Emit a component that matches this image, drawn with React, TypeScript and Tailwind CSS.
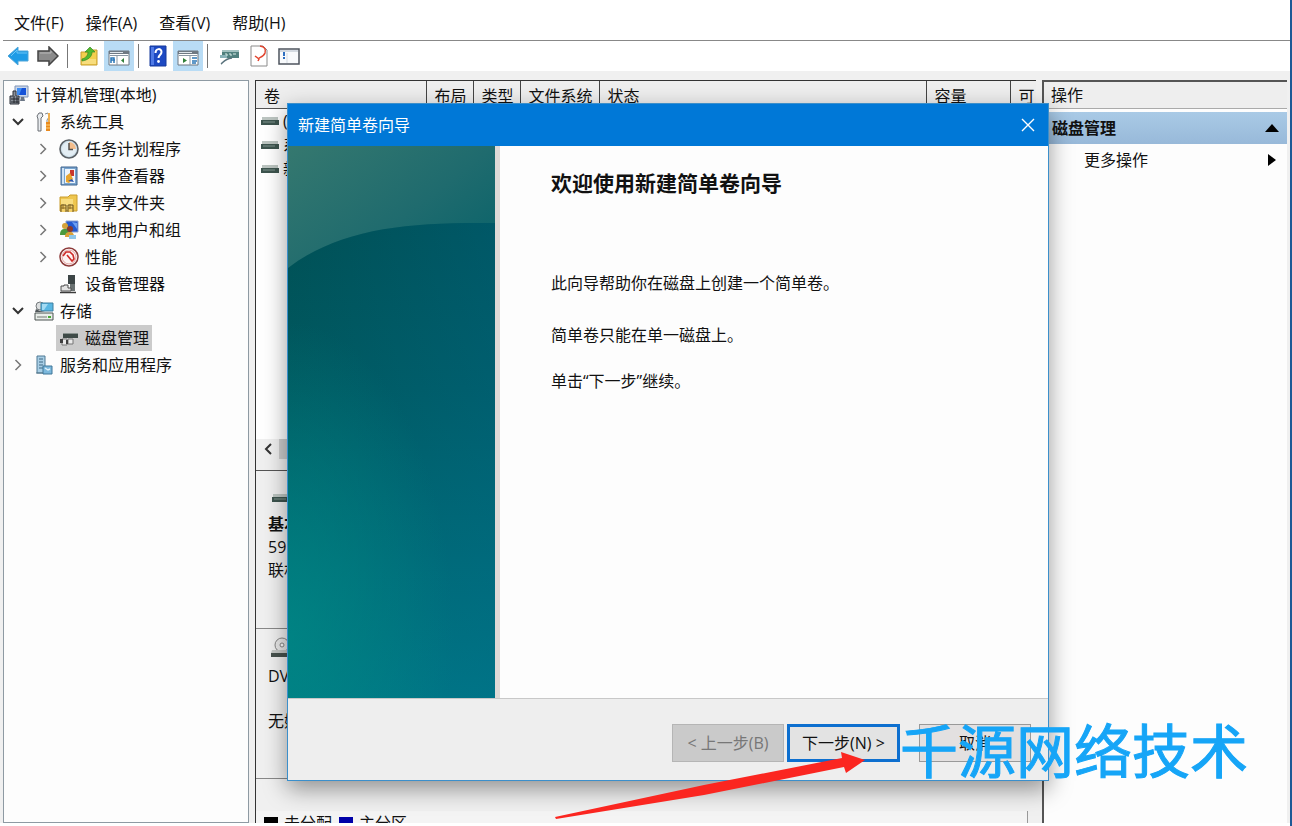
import { ReactNode } from "react";

type TreeItem = {
  label: string;
  level: number;
  icon: ReactNode;
  open?: boolean;
  closed?: boolean;
  selected?: boolean;
};

const ComputerIcon = () => (
  <svg viewBox="0 0 20 20" className="size-5 shrink-0">
    <path d="M6 1h13v11H6z" fill="#c9d6ea" stroke="#7f93b5" />
    <path d="M8 3h9v7H8z" fill="#1552d8" />
    <path d="M8 3h5l-3 7H8z" fill="#3f8cf0" />
    <path d="M12 12h3l1 4h-5z" fill="#6b7685" />
    <path d="M1 11h3V6h3v5h3v8H1z" fill="#8a9099" stroke="#2b2f36" />
    <path d="M2 14h8M2 17h8M5 11v7M8 12v6" stroke="#23262c" />
  </svg>
);

const ToolsIcon = () => (
  <svg viewBox="0 0 20 20" className="size-5 shrink-0">
    <path d="M4 19V7L3 4l2-3h3l1 3-2 2v13z" fill="#e9ecef" stroke="#6b6f75" />
    <path d="M11 2l3-1 1 4-2 3v3" fill="none" stroke="#8a8f96" />
    <path d="M12 10h4v9h-4z" fill="#e98a1f" />
    <path d="M14 1h2v9h-2z" fill="#f0b050" />
    <path d="M12 13h4M12 16h4" stroke="#ffd27a" />
  </svg>
);

const ClockIcon = () => (
  <svg viewBox="0 0 20 20" className="size-5 shrink-0">
    <circle cx="10" cy="10" r="9" fill="#cfe0ea" stroke="#5b6166" strokeWidth="1.6" />
    <circle cx="10" cy="10" r="7" fill="#e4eef4" />
    <path d="M10 10V3a7 7 0 0 1 7 7z" fill="#f3bd8b" />
    <path d="M10 4v6.500h4" fill="none" stroke="#54504c" strokeWidth="1.500" />
  </svg>
);

const EventIcon = () => (
  <svg viewBox="0 0 20 20" className="size-5 shrink-0">
    <path d="M2 1h16v18H2z" fill="#7aa5cf" stroke="#3e648f" />
    <path d="M6 3h10v14H6z" fill="#eef4fb" />
    <path d="M4 2v16" stroke="#cfe2f4" strokeWidth="2" />
    <path d="M11 4h4v6h-4z" fill="#c8372d" />
    <path d="M7 10l4-3 3 6-4 4-3-1z" fill="#e9a52e" />
    <path d="M9 15l4-2 2 3z" fill="#2c57b0" />
  </svg>
);

const SharedIcon = () => (
  <svg viewBox="0 0 20 20" className="size-5 shrink-0">
    <path d="M1 4h8l2-2h7v16H1z" fill="#eec64f" stroke="#c99c2c" />
    <path d="M2 6h12v11H2z" fill="#f8dd80" />
    <path d="M2 19v-7h5v7M9 19v-7h5v7" fill="#f3d06a" stroke="#66511f" />
    <path d="M4 11v5M11 11v5M2 15h5M9 15h5" stroke="#8a6a25" />
  </svg>
);

const UsersIcon = () => (
  <svg viewBox="0 0 20 20" className="size-5 shrink-0">
    <path d="M7 1h12v11H7z" fill="#2459cf" stroke="#8fa4cf" />
    <path d="M13 2l5 1v6z" fill="#6ea0f2" />
    <circle cx="6" cy="6" r="3" fill="#d4a23a" />
    <path d="M1 15c0-5 2-6 5-6s4 2 4 6z" fill="#4a9a3d" />
    <circle cx="11" cy="9" r="3" fill="#8c3b2b" />
    <path d="M6 17c0-4 2-5 5-5s4 2 4 5z" fill="#d9a136" />
    <path d="M10 15h7v4h-7z" fill="#8fc7ea" />
  </svg>
);

const PerfIcon = () => (
  <svg viewBox="0 0 20 20" className="size-5 shrink-0">
    <circle cx="10" cy="10" r="9" fill="#fff" stroke="#8d3a39" strokeWidth="1.500" />
    <circle cx="10" cy="10" r="7" fill="#fdf3f2" stroke="#e5a2a0" />
    <path d="M4 9l3-4h4l3 3 1 4-2 2-5-6" fill="none" stroke="#cf2a27" strokeWidth="1.600" />
  </svg>
);

const DeviceIcon = () => (
  <svg viewBox="0 0 20 20" className="size-5 shrink-0">
    <path d="M9 1h7v9H9z" fill="#3c4546" />
    <path d="M11 10h5v7h-5z" fill="#697171" />
    <path d="M2 12h3v-1h4v3h3v3H2z" fill="#e3e3e3" stroke="#4c4c4c" />
    <path d="M1 18.500h16" stroke="#3b3b3b" strokeWidth="1.500" />
  </svg>
);

const StorageIcon = () => (
  <svg viewBox="0 0 20 20" className="size-5 shrink-0">
    <circle cx="6" cy="5" r="4" fill="#dcdfe0" stroke="#74797c" />
    <path d="M7 2h12v8H7z" fill="#58b6e2" stroke="#3c7f9f" />
    <path d="M8 3h6l-4 6H8z" fill="#a3dbf3" />
    <path d="M2 8l4 2 5 1H1z" fill="#50575a" />
    <path d="M1 12h18v7H1z" fill="#e9eeea" stroke="#4b5250" />
    <path d="M3 16h10" stroke="#707673" />
    <path d="M14 15h3v2h-3z" fill="#49a935" />
  </svg>
);

const DiskMgmtIcon = () => (
  <svg viewBox="0 0 20 20" className="size-5 shrink-0">
    <path d="M4 5h15v5H4z" fill="#3e4a47" />
    <path d="M4 5h15v1H4z" fill="#89928f" />
    <path d="M3 11h5v6H3zM9 11h5v5H9z" fill="#e9e9e9" stroke="#767676" />
    <path d="M1 11h3v4H1zM7 12h2v4H7z" fill="#3f3f3f" />
  </svg>
);

const ServicesIcon = () => (
  <svg viewBox="0 0 20 20" className="size-5 shrink-0">
    <path d="M3 1h8v17H3z" fill="#a9cfe6" stroke="#4f7893" />
    <path d="M5 4h4M5 7h4M5 10h4M5 13h4" stroke="#3f6984" />
    <path d="M9 11h9v8H9z" fill="#7cb8dc" stroke="#3e7799" />
    <path d="M11 13l3 2 2-1" fill="none" stroke="#e2f3fc" strokeWidth="1.500" />
    <path d="M2 18h7" stroke="#57798c" />
  </svg>
);

const DriveIcon = () => (
  <svg viewBox="0 0 18 10" className="h-[10px] w-[18px] shrink-0">
    <path d="M1 1h16v3H1z" fill="#bcc5c1" />
    <path d="M0 4h18v5H0z" fill="#3d544e" />
    <path d="M2 6h12" stroke="#80948e" />
  </svg>
);

const CdIcon = () => (
  <svg viewBox="0 0 22 22" className="h-[22px] w-[22px] shrink-0">
    <circle cx="12" cy="9" r="7" fill="#e8e8e8" stroke="#858585" />
    <circle cx="12" cy="9" r="2" fill="#fff" stroke="#858585" />
    <path d="M2 14h20l-1 3H1z" fill="#c5c8c6" />
    <path d="M1 17h21v4H1z" fill="#47524e" />
  </svg>
);

const BackIcon = () => (
  <svg viewBox="0 0 22 20" className="h-5 w-[22px]">
    <path d="M1 10l10-9v4h10v10H11v4z" fill="#1e9be6" stroke="#4fa5d8" />
    <path d="M4 10l6-6v3h10" fill="none" stroke="#6cc6f6" />
  </svg>
);

const ForwardIcon = () => (
  <svg viewBox="0 0 22 20" className="h-5 w-[22px]">
    <path d="M21 10L12 1v4H1v10h11v4z" fill="#8b8b8b" stroke="#444" strokeWidth="1.500" />
    <path d="M3 7h11V5" fill="none" stroke="#b9b9b9" />
  </svg>
);

const UpIcon = () => (
  <svg viewBox="0 0 20 20" className="size-5">
    <path d="M2 6h8l2-2h6v15H2z" fill="#f4cf4d" stroke="#c79d30" />
    <path d="M3 13h14v5H3z" fill="#f8dd7d" />
    <path d="M3 13c4-1 6-4 6-7H6l5-5 5 5h-3c0 5-4 8-10 9z" fill="#52b92f" stroke="#388a22" strokeWidth=".7" />
  </svg>
);

const TreePaneIcon = () => (
  <svg viewBox="0 0 22 20" className="h-5 w-[22px]">
    <path d="M1 5h20v14H1z" fill="#fff" stroke="#6d7680" />
    <path d="M1 5h20v3H1z" fill="#6f7983" />
    <path d="M2 6.500h13" stroke="#dfe6ec" />
    <path d="M9 9v10M2 9.500h18" stroke="#8a97a3" />
    <path d="M3 17v-5h3v5M3 14h4" fill="none" stroke="#2d78b8" strokeWidth="1.500" />
    <path d="M16 12v5l-3-2.500z" fill="#32803a" />
  </svg>
);

const ActionPaneIcon = () => (
  <svg viewBox="0 0 22 20" className="h-5 w-[22px]">
    <path d="M1 5h20v14H1z" fill="#fff" stroke="#6d7680" />
    <path d="M1 5h20v3H1z" fill="#6f7983" />
    <path d="M2 6.500h13" stroke="#dfe6ec" />
    <path d="M13 9v10M2 9.500h18" stroke="#8a97a3" />
    <path d="M15 12h5M15 15h5M15 17h4" stroke="#2d78b8" strokeWidth="1.500" />
    <path d="M6 12v5l4-2.500z" fill="#32803a" />
  </svg>
);

const HelpIcon = () => (
  <svg viewBox="0 0 20 22" className="h-[22px] w-5">
    <path d="M2 1h16v20H2z" fill="#1d49c2" stroke="#173a9c" />
    <path d="M3 2h3v18H3z" fill="#4f7ae6" />
    <path d="M7.500 8c0-5 6-5 6-1 0 3-3 3-3 6" fill="none" stroke="#fff" strokeWidth="2" />
    <circle cx="10.500" cy="16.500" r="1.400" fill="#fff" />
  </svg>
);

const RefreshIcon = () => (
  <svg viewBox="0 0 20 20" className="size-5">
    <path d="M3 4h17v8H3z" fill="#4f7f7d" />
    <path d="M3 4h17v2H3z" fill="#a2c1c0" />
    <path d="M1 9h7v3H1z" fill="#88b2b8" />
    <path d="M6 8h2v2M10 8h2v2M14 8h3" fill="none" stroke="#d8ece7" />
    <path d="M2 18c2-1 3-5 11-6" fill="none" stroke="#59727c" strokeWidth="1.500" />
  </svg>
);

const CheckDocIcon = () => (
  <svg viewBox="0 0 20 22" className="h-[22px] w-5">
    <path d="M2 1h12l4 4v16H2z" fill="#fff" stroke="#8b8b8b" />
    <path d="M11 1c5 1 6 3 5 7-1 3-4 4-6 5" fill="none" stroke="#e2452f" strokeWidth="1.500" />
    <path d="M6 11l4 3-1 2" fill="none" stroke="#e2452f" strokeWidth="1.500" />
  </svg>
);

const ListIcon = () => (
  <svg viewBox="0 0 22 20" className="h-5 w-[22px]">
    <path d="M1 3h20v15H1z" fill="#f8fafc" stroke="#4d545e" strokeWidth="1.500" />
    <path d="M2 5h18" stroke="#aeb9c6" />
    <path d="M6 6v4M6 11v2" stroke="#2e6fc1" strokeWidth="2" />
    <path d="M9 7v10" stroke="#d3dae2" />
  </svg>
);

const Chevron = ({ open }: { open?: boolean }) => (
  <svg viewBox="0 0 20 20" className="size-5 shrink-0" fill="none">
    {open ? (
      <path d="M5 7l5 5 5-5" stroke="#333" strokeWidth="2" />
    ) : (
      <path d="M7.500 5l5 5-5 5" stroke="#777" strokeWidth="1.500" />
    )}
  </svg>
);

const menus = ["文件(F)", "操作(A)", "查看(V)", "帮助(H)"];

const tree: TreeItem[] = [
  { label: "计算机管理(本地)", level: 0, icon: <ComputerIcon /> },
  { label: "系统工具", level: 1, icon: <ToolsIcon />, open: true },
  { label: "任务计划程序", level: 2, icon: <ClockIcon />, closed: true },
  { label: "事件查看器", level: 2, icon: <EventIcon />, closed: true },
  { label: "共享文件夹", level: 2, icon: <SharedIcon />, closed: true },
  { label: "本地用户和组", level: 2, icon: <UsersIcon />, closed: true },
  { label: "性能", level: 2, icon: <PerfIcon />, closed: true },
  { label: "设备管理器", level: 2, icon: <DeviceIcon /> },
  { label: "存储", level: 1, icon: <StorageIcon />, open: true },
  { label: "磁盘管理", level: 2, icon: <DiskMgmtIcon />, selected: true },
  { label: "服务和应用程序", level: 1, icon: <ServicesIcon />, closed: true },
];

const levelPadding = ["pl-[2px]", "pl-[4px]", "pl-[29px]"];

const columns = [
  { label: "卷", width: "w-[170px]" },
  { label: "布局", width: "w-[47px]" },
  { label: "类型", width: "w-[47px]" },
  { label: "文件系统", width: "w-[79px]" },
  { label: "状态", width: "" },
  { label: "容量", width: "w-[84px]" },
  { label: "可", width: "w-[26px]" },
];

const volumes = ["(C:)", "系统保留", "新加卷"];

function ToolButton({ label, active, children }: { label: string; active?: boolean; children: ReactNode }) {
  return (
    <button
      aria-label={label}
      className={`flex h-[30px] w-[30px] items-center justify-center ${active ? "bg-[#b9dcf5]" : ""}`}
    >
      {children}
    </button>
  );
}

const Separator = () => <span className="mx-1 h-6 w-px bg-[#777]" />;

function Toolbar() {
  return (
    <div className="flex h-[30px] items-center pl-[3px]">
      <ToolButton label="后退"><BackIcon /></ToolButton>
      <ToolButton label="前进"><ForwardIcon /></ToolButton>
      <Separator />
      <span className="w-[2px]" />
      <ToolButton label="上一级"><UpIcon /></ToolButton>
      <ToolButton label="显示/隐藏控制台树" active><TreePaneIcon /></ToolButton>
      <Separator />
      <ToolButton label="帮助"><HelpIcon /></ToolButton>
      <ToolButton label="显示/隐藏操作窗格" active><ActionPaneIcon /></ToolButton>
      <Separator />
      <span className="w-[2px]" />
      <ToolButton label="刷新"><RefreshIcon /></ToolButton>
      <ToolButton label="属性"><CheckDocIcon /></ToolButton>
      <ToolButton label="列表"><ListIcon /></ToolButton>
    </div>
  );
}

function ConsoleTree() {
  return (
    <nav className="w-[246px] shrink-0 border border-[#8e9aa3] bg-[#fdfdfd]">
      <ul>
        {tree.map((item) => (
          <li key={item.label} className={`flex h-[27px] items-center ${levelPadding[item.level]}`}>
            {item.level > 0 && (
              <span className="mr-[3px] flex size-5 shrink-0">
                {(item.open || item.closed) && <Chevron open={item.open} />}
              </span>
            )}
            <button
              className={`flex h-[26px] items-center gap-[6px] whitespace-nowrap px-[3px] ${
                item.selected ? "bg-[#cbcbcb]" : ""
              }`}
            >
              {item.icon}
              {item.label}
            </button>
          </li>
        ))}
      </ul>
    </nav>
  );
}

function VolumePane() {
  return (
    <main className="flex min-w-0 flex-1 flex-col border-l border-t border-[#333] bg-[#f0f0f0]">
      <div className="min-h-0 flex-1 overflow-hidden bg-white">
        <table className="w-full table-fixed border-collapse">
          <thead>
            <tr className="h-[27px] border-b border-[#555] bg-[#eeeeee]">
              {columns.map((col) => (
                <th
                  key={col.label}
                  className={`overflow-hidden whitespace-nowrap border-r border-[#444] p-0 pl-2 pt-[3px] text-left font-normal last:border-r-0 ${col.width}`}
                >
                  {col.label}
                </th>
              ))}
            </tr>
          </thead>
          <tbody>
            {volumes.map((name) => (
              <tr key={name} className="h-6">
                <td className="p-0 pl-[5px]">
                  <span className="flex items-center gap-1">
                    <DriveIcon />
                    {name}
                  </span>
                </td>
              </tr>
            ))}
          </tbody>
        </table>
      </div>
      <div className="flex h-6 items-start bg-[#f0f0f0]">
        <button aria-label="向左滚动" className="flex h-5 w-[23px] items-center justify-center">
          <svg viewBox="0 0 10 12" className="h-3 w-[10px]" fill="none">
            <path d="M8 1L3 6l5 5" stroke="#333" strokeWidth="2" />
          </svg>
        </button>
        <span className="h-5 w-[400px] bg-[#cdcdcd]" />
      </div>
      <div className="h-2 border-b border-[#555]" />
      <section className="h-[158px] border-b border-[#888] pl-3 pt-[22px] leading-[23px]">
        <span className="flex h-5 items-start pl-1"><DriveIcon /></span>
        <p className="font-bold">基本</p>
        <p>59.88 GB</p>
        <p>联机</p>
      </section>
      <section className="h-[150px] border-b border-[#888] pl-3 pt-[7px] leading-[23px]">
        <span className="flex pl-[2px]"><CdIcon /></span>
        <p className="pt-[7px]">DVD (D:)</p>
        <p className="pt-[22px]">无媒体</p>
      </section>
      <div className="h-8" />
      <div className="mr-2 flex h-3 items-start overflow-hidden border-r border-[#999] bg-[#f4f4f4] pl-2 leading-6">
        <span className="mr-[6px] mt-[6px] h-3 w-[14px] shrink-0 bg-black" />
        <span className="w-[52px] whitespace-nowrap">未分配</span>
        <span className="ml-[3px] mr-[6px] mt-[6px] h-3 w-[14px] shrink-0 bg-[#0000a8]" />
        <span className="whitespace-nowrap">主分区</span>
      </div>
    </main>
  );
}

function ActionsPane() {
  return (
    <aside className="w-[245px] shrink-0 border-l-2 border-t-2 border-[#555] bg-[#fdfdfd]">
      <h2 className="flex h-[27px] items-center border-b border-[#aaa] bg-[#eeeeee] pl-[7px]">操作</h2>
      <button className="mt-[3px] flex h-8 w-full items-center justify-between bg-linear-to-b from-[#a9cae6] to-[#98b9d9] pl-2 pr-2 font-bold">
        磁盘管理
        <svg viewBox="0 0 14 8" className="h-2 w-[14px]"><path d="M7 0l7 8H0z" fill="#000" /></svg>
      </button>
      <button className="flex h-8 w-full items-center justify-between pl-10 pr-[11px]">
        更多操作
        <svg viewBox="0 0 8 12" className="h-3 w-2"><path d="M0 0l8 6-8 6z" fill="#000" /></svg>
      </button>
    </aside>
  );
}

function WizardBanner() {
  return (
    <svg viewBox="0 0 207 552" preserveAspectRatio="none" className="h-full w-[207px] shrink-0">
      <defs>
        <linearGradient id="top" x1="0" y1="0" x2="1" y2="1">
          <stop offset="0" stopColor="#35786f" />
          <stop offset=".5" stopColor="#1f6b6e" />
          <stop offset="1" stopColor="#005f68" />
        </linearGradient>
        <linearGradient id="deep" x1="0" y1="0" x2="0" y2="1">
          <stop offset="0" stopColor="#005055" />
          <stop offset=".35" stopColor="#005a61" />
          <stop offset="1" stopColor="#007783" />
        </linearGradient>
        <radialGradient id="glow" cx="0" cy=".84" r=".8">
          <stop offset="0" stopColor="#008a86" />
          <stop offset="1" stopColor="#008a86" stopOpacity="0" />
        </radialGradient>
        <linearGradient id="side" x1="0" y1="0" x2="1" y2="0">
          <stop offset="0" stopColor="#006a90" stopOpacity="0" />
          <stop offset="1" stopColor="#006a90" stopOpacity=".3" />
        </linearGradient>
      </defs>
      <rect width="207" height="160" fill="url(#top)" />
      <path d="M0 122C52 82 120 76 207 77V552H0z" fill="url(#deep)" />
      <path d="M0 122C52 82 120 76 207 77V552H0z" fill="url(#side)" />
      <rect y="160" width="207" height="392" fill="url(#glow)" opacity=".7" />
    </svg>
  );
}

function WizardDialog() {
  return (
    <div
      role="dialog"
      aria-labelledby="wizard-title"
      className="absolute left-[287px] top-[103px] flex w-[762px] flex-col border border-[#3b8fcb] bg-[#eeeeee] shadow-[0_8px_22px_rgba(0,0,0,0.4)]"
    >
      <header className="flex h-[42px] items-center justify-between bg-[#0078d7] pl-[10px] pr-[13px] text-white">
        <span id="wizard-title">新建简单卷向导</span>
        <button aria-label="关闭">
          <svg viewBox="0 0 14 14" className="size-[14px]" fill="none">
            <path d="M1 1l12 12M13 1L1 13" stroke="#fff" strokeWidth="1.400" />
          </svg>
        </button>
      </header>
      <div className="flex h-[552px] bg-[#fdfdfd]">
        <WizardBanner />
        <div className="w-[5px] bg-[#dedad7]" />
        <div className="pl-[51px] pt-[23px]">
          <h1 className="text-[21px] font-bold leading-7">欢迎使用新建简单卷向导</h1>
          <p className="mt-[74px]">此向导帮助你在磁盘上创建一个简单卷。</p>
          <p className="mt-7">简单卷只能在单一磁盘上。</p>
          <p className="mt-[22px]">单击“下一步”继续。</p>
        </div>
      </div>
      <footer className="flex justify-end border-t border-[#c8c8c8] pb-[18px] pr-[17px] pt-[25px]">
        <button disabled className="h-[38px] w-28 border border-[#b5b5b5] bg-[#cacaca] text-[#777]">
          &lt; 上一步(B)
        </button>
        <button className="ml-[3px] h-[38px] w-[113px] border-[3px] border-[#0d6fcf] bg-[#e3e3e3]">
          下一步(N) &gt;
        </button>
        <button className="ml-[19px] h-[38px] w-28 border border-[#999] bg-[#e3e0e0]">取消</button>
      </footer>
    </div>
  );
}

export default function App() {
  return (
    <div className="relative flex h-screen flex-col overflow-hidden border-r-2 border-[#1d5a96] bg-white pb-[3px] font-['Open_Sans','Noto_Sans_CJK_SC',sans-serif] text-base leading-6 text-[#111]">
      <div className="flex h-10 items-center gap-[22px] pl-[14px] pt-[6px]">
        {menus.map((label) => (
          <button key={label}>{label}</button>
        ))}
      </div>
      <div className="ml-[3px] border-t border-[#888]" />
      <Toolbar />
      <div className="flex min-h-0 flex-1 gap-[6px] bg-[#f0f0f0] pl-[3px] pr-[3px] pt-[9px]">
        <ConsoleTree />
        <VolumePane />
        <ActionsPane />
      </div>

      <WizardDialog />

      {/* watermark and pointer sit above everything */}
      <p className="pointer-events-none absolute left-[900px] top-[717px] whitespace-nowrap text-[58px] leading-[68px] text-[#16a5f7] [-webkit-text-stroke:1px_#16a5f7]">
        千源网络技术
      </p>
      <svg viewBox="0 0 312 70" className="pointer-events-none absolute left-[554px] top-[751px] h-[70px] w-[312px]">
        <path d="M1 66L150 34 288 7 287 1 311 9 292 22 290 16 150 44 2 68z" fill="#fb2620" />
      </svg>
    </div>
  );
}
